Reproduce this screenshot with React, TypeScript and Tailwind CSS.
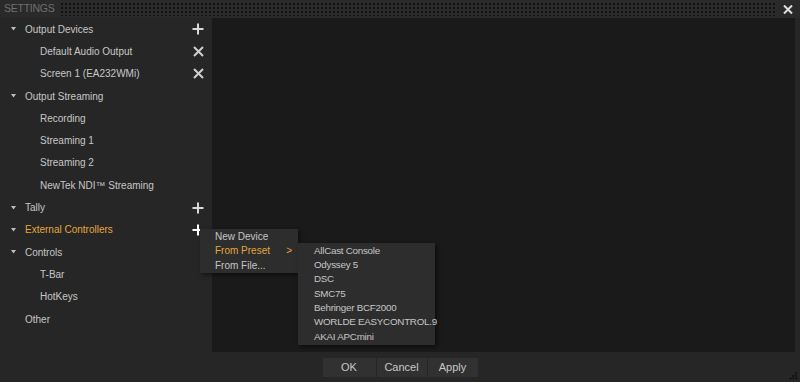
import React from "react";

type Row = {
  label: string;
  level: 0 | 1;
  arrow?: boolean;
  icon?: "plus" | "x";
  active?: boolean;
};

const rows: Row[] = [
  { label: "Output Devices", level: 0, arrow: true, icon: "plus" },
  { label: "Default Audio Output", level: 1, icon: "x" },
  { label: "Screen 1 (EA232WMi)", level: 1, icon: "x" },
  { label: "Output Streaming", level: 0, arrow: true },
  { label: "Recording", level: 1 },
  { label: "Streaming 1", level: 1 },
  { label: "Streaming 2", level: 1 },
  { label: "NewTek NDI™ Streaming", level: 1 },
  { label: "Tally", level: 0, arrow: true, icon: "plus" },
  { label: "External Controllers", level: 0, arrow: true, icon: "plus", active: true },
  { label: "Controls", level: 0, arrow: true },
  { label: "T-Bar", level: 1 },
  { label: "HotKeys", level: 1 },
  { label: "Other", level: 0 },
];

const presets = [
  "AllCast Console",
  "Odyssey 5",
  "DSC",
  "SMC75",
  "Behringer BCF2000",
  "WORLDE EASYCONTROL.9",
  "AKAI APCmini",
];

function PlusIcon({ bright }: { bright?: boolean }) {
  return (
    <svg width="12" height="12" viewBox="0 0 12 12">
      <path d="M6 0.5V11.5M0.5 6H11.5" stroke={bright ? "#ffffff" : "#d8d8d8"} strokeWidth="2" />
    </svg>
  );
}

function XIcon() {
  return (
    <svg width="11" height="11" viewBox="0 0 11 11">
      <path d="M1 1L10 10M10 1L1 10" stroke="#d0d0d0" strokeWidth="2" />
    </svg>
  );
}

export default function App() {
  return (
    <div
      className="relative w-[800px] h-[382px] bg-[#262626] flex flex-col overflow-hidden text-[10px] text-[#c6c6c6] whitespace-nowrap"
      style={{ fontFamily: "'Liberation Sans', Arial, sans-serif" }}
    >
      {/* title bar */}
      <div className="h-[18px] flex items-center bg-[#2a2a2a]">
        <span className="pl-[4px] pr-[6px] text-[10.5px] text-[#707070] tracking-tight">SETTINGS</span>
        <div className="flex-1 h-[14px] bg-[radial-gradient(#121212_0.9px,transparent_1.2px)] bg-[length:4px_4px]" />
        <div className="w-[25px] flex justify-center">
          <svg width="10" height="9" viewBox="0 0 10 9">
            <path d="M1 0.5L9 8.5M9 0.5L1 8.5" stroke="#e0e0e0" strokeWidth="2" />
          </svg>
        </div>
      </div>

      <div className="flex-1 flex min-h-0">
        {/* tree */}
        <div className="w-[212px]">
          {rows.map((r) => (
            <div key={r.label} className="h-[22.3px] flex items-center">
              <div className="w-[25px] flex justify-center pl-[1px]">
                {r.arrow && (
                  <svg width="5" height="4" viewBox="0 0 5 4">
                    <path d="M0 0H5L2.5 3.5Z" fill="#bdbdbd" />
                  </svg>
                )}
              </div>
              <span
                className={`flex-1 ${r.level === 1 ? "pl-[15px]" : ""} ${
                  r.active ? "text-[#e4a63c]" : "text-[#c6c6c6]"
                }`}
              >
                {r.label}
              </span>
              <div className="w-[26px] flex justify-center pr-[2px]">
                {r.icon === "plus" && <PlusIcon bright={r.active} />}
                {r.icon === "x" && <XIcon />}
              </div>
            </div>
          ))}
        </div>

        {/* content */}
        <div className="flex-1 mr-[5px] bg-[#1a1a1a]" />
      </div>

      {/* bottom bar */}
      <div className="h-[30px] flex justify-center items-center relative">
        <div className="flex gap-[1px] text-[11px] text-[#c8c8c8]">
          <button className="w-[53px] h-[19px] bg-[#313131] flex items-center justify-center">OK</button>
          <button className="w-[50px] h-[19px] bg-[#313131] flex items-center justify-center">Cancel</button>
          <button className="w-[50px] h-[19px] bg-[#313131] flex items-center justify-center">Apply</button>
        </div>
        <svg className="absolute right-[2px] bottom-[2px]" width="9" height="9" viewBox="0 0 9 9">
          <circle cx="7" cy="2" r="1" fill="#0e0e0e" />
          <circle cx="4" cy="5" r="1" fill="#0e0e0e" />
          <circle cx="7" cy="5" r="1" fill="#0e0e0e" />
          <circle cx="1.5" cy="7.5" r="1" fill="#0e0e0e" />
          <circle cx="4.5" cy="7.5" r="1" fill="#0e0e0e" />
          <circle cx="7.5" cy="7.5" r="1" fill="#0e0e0e" />
        </svg>
      </div>

      {/* context menu */}
      <div className="absolute left-[200px] top-[229px] w-[98px] bg-[#2d2d2d] shadow-[2px_2px_4px_rgba(0,0,0,0.5)]">
        <div className="h-[14.5px] flex items-center pl-[15px]">New Device</div>
        <div className="h-[14.5px] flex items-center pl-[15px] text-[#e4a63c]">
          <span className="flex-1">From Preset</span>
          <span className="pr-[6px]">&gt;</span>
        </div>
        <div className="h-[14.5px] flex items-center pl-[15px]">From File...</div>
      </div>

      {/* submenu */}
      <div className="absolute left-[298px] top-[243px] w-[137px] py-[1px] bg-[#2d2d2d] shadow-[2px_2px_4px_rgba(0,0,0,0.5)] text-[9.8px] tracking-[-0.25px]">
        {presets.map((p) => (
          <div key={p} className="h-[14.3px] flex items-center pl-[16px]">
            {p}
          </div>
        ))}
      </div>
    </div>
  );
}
